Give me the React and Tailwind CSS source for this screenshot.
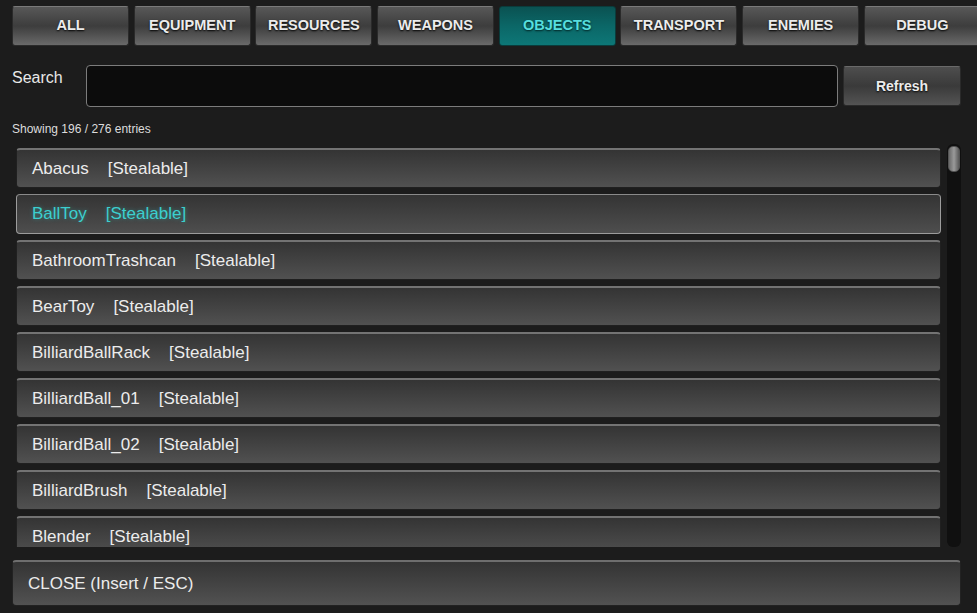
import React from "react";

const tabs = ["ALL", "EQUIPMENT", "RESOURCES", "WEAPONS", "OBJECTS", "TRANSPORT", "ENEMIES", "DEBUG"];

const items = [
  "Abacus",
  "BallToy",
  "BathroomTrashcan",
  "BearToy",
  "BilliardBallRack",
  "BilliardBall_01",
  "BilliardBall_02",
  "BilliardBrush",
  "Blender",
];

export default function App() {
  const active = "OBJECTS";
  const selected = "BallToy";

  return (
    <div className="w-[977px] h-[613px] overflow-hidden bg-[#1c1c1c] text-[#e6e6e6] font-['Liberation_Sans',Arial,sans-serif] flex flex-col">
      {/* category tabs */}
      <div className="flex gap-[4.7px] pl-[12px] pt-[6px] h-[46px] shrink-0">
        {tabs.map((t) => (
          <button
            key={t}
            className={
              t === active
                ? "w-[117px] shrink-0 h-[40px] rounded-[3px] border border-[#0a3c3c] bg-gradient-to-b from-[#0a5252] via-[#0b6767] to-[#0d7777] text-[#56dede] text-[14.5px] font-bold [text-shadow:0_1px_2px_#022]"
                : "w-[117px] shrink-0 h-[40px] rounded-[3px] border border-[#2a2a2a] border-t-[#7a7a7a] bg-gradient-to-b from-[#585858] via-[#3d3d3d] to-[#6a6a6a] text-[#ececec] text-[14.5px] font-bold [text-shadow:0_1px_2px_#000]"
            }
          >
            {t}
          </button>
        ))}
      </div>

      {/* search */}
      <div className="flex items-start pl-[12px] pr-[16px] mt-[19px] h-[42px] shrink-0">
        <div className="w-[74px] text-[16px] leading-none pt-[5px] text-[#e8e8e8]">Search</div>
        <input className="flex-1 h-[42px] rounded-[4px] border border-[#7c7c7c] bg-[#0c0c0c] outline-none px-2 text-white" />
        <button className="ml-[5px] mt-[1px] w-[118px] h-[40px] rounded-[3px] border border-[#2a2a2a] border-t-[#6a6a6a] bg-gradient-to-b from-[#4e4e4e] via-[#3a3a3a] to-[#545454] text-[#ececec] text-[14px] font-bold [text-shadow:0_1px_2px_#000]">
          Refresh
        </button>
      </div>

      <div className="pl-[12px] mt-[15px] text-[12px] leading-[14px] text-[#dcdcdc]">Showing 196 / 276 entries</div>

      {/* list */}
      <div className="flex pl-[12px] pr-[16px] mt-[8px] h-[403px] shrink-0">
        <div className="flex-1 overflow-hidden pl-[4px] pt-[4px] flex flex-col gap-[6px]">
          {items.map((name) => {
            const sel = name === selected;
            return (
              <div
                key={name}
                className={
                  sel
                    ? "h-[40px] shrink-0 rounded-[4px] border border-[#9c9c9c] border-t-[#8a8a8a] bg-gradient-to-b from-[#343434] to-[#4e4e4e] flex items-center pl-[15px] text-[17px] text-[#3ccfcf] [text-shadow:0_0_4px_rgba(40,200,200,0.45)]"
                    : "h-[40px] shrink-0 rounded-[4px] border border-[#202020] border-t-[2px] border-t-[#737373] bg-gradient-to-b from-[#343434] to-[#515151] flex items-center pl-[15px] text-[17px] text-[#ececec]"
                }
              >
                <span>{name}</span>
                <span className="ml-[19px]">[Stealable]</span>
              </div>
            );
          })}
        </div>
        <div className="ml-[6px] w-[14px] bg-[#101010] rounded-[6px] p-[1px] pt-[2px]">
          <div className="h-[26px] rounded-[5px] border border-[#555] bg-gradient-to-r from-[#6a6a6a] via-[#9a9a9a] to-[#5a5a5a]" />
        </div>
      </div>

      {/* close */}
      <div className="pl-[12px] pr-[16px] mt-[13px] shrink-0">
        <div className="w-full h-[46px] rounded-[4px] border border-[#222] border-t-[2px] border-t-[#6e6e6e] bg-gradient-to-b from-[#343434] to-[#525252] flex items-center pl-[15px] pt-[1px] text-[17px] text-[#ececec]">
          CLOSE (Insert / ESC)
        </div>
      </div>
    </div>
  );
}
